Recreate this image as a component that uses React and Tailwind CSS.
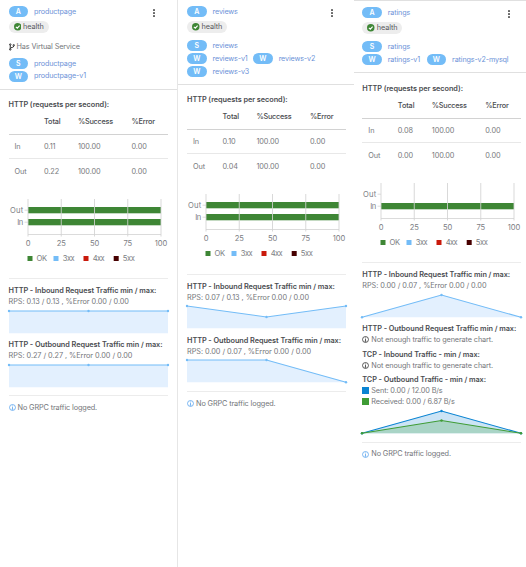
import React from 'react';

function Pill({ letter }) {
  return (
    <span className="flex h-[11px] w-[19.5px] shrink-0 items-center justify-center rounded-full bg-[#73bcf7] text-[7px] font-semibold text-white">
      {letter}
    </span>
  );
}

function Badge({ letter, name, className = '' }) {
  return (
    <div className={`flex h-[12.7px] items-center gap-[6px] ${className}`}>
      <Pill letter={letter} />
      <span className="text-[7.2px] tracking-[-0.13px] text-[#6c92d8]">{name}</span>
    </div>
  );
}

function Kebab() {
  return (
    <svg viewBox="0 0 4 10" className="mr-[14px] mt-[3px] h-[10px] w-[4px] fill-[#666]">
      <rect x="1" y="1" width="2" height="2" rx=".6" />
      <rect x="1" y="4" width="2" height="2" rx=".6" />
      <rect x="1" y="7" width="2" height="2" rx=".6" />
    </svg>
  );
}

function Health() {
  return (
    <div className="flex h-[11.5px] w-[40px] items-center gap-[2px] rounded-full bg-[#ededed] pl-[5px] text-[7.3px] tracking-[-0.1px] text-[#55575a]">
      <svg viewBox="0 0 16 16" className="h-[7.5px] w-[7.5px] shrink-0">
        <circle cx="8" cy="8" r="8" fill="#3e8635" />
        <path d="M4 8.3 7 11l5-5.5" fill="none" stroke="#fff" strokeWidth="2.4" />
      </svg>
      <span>health</span>
    </div>
  );
}

function BranchIcon() {
  return (
    <svg viewBox="0 0 12 16" className="h-[8px] w-[6px] shrink-0">
      <g fill="none" stroke="#333" strokeWidth="2">
        <circle cx="2.5" cy="3" r="1.4" />
        <circle cx="2.5" cy="13" r="1.4" />
        <circle cx="9.5" cy="4.5" r="1.4" />
        <path d="M2.5 4v8M9.5 6c0 4-6 2-7 5" />
      </g>
    </svg>
  );
}

function InfoIcon({ className }) {
  return (
    <svg viewBox="0 0 16 16" className={`h-[7px] w-[7px] shrink-0 ${className}`}>
      <circle cx="8" cy="8" r="6.8" fill="none" stroke="currentColor" strokeWidth="1.8" />
      <path d="M8 3.5v2M8 6.8V12M6.3 12h3.4" fill="none" stroke="currentColor" strokeWidth="1.8" />
    </svg>
  );
}

function RequestTable({ rows }) {
  return (
    <div className="text-[7.3px] tracking-[-0.1px] text-[#77797d]">
      <div className="grid h-[24.5px] grid-cols-[35.5px_34px_53.5px_1fr] items-center border-b border-[#d2d2d2] text-[#4a4c50]">
        <span />
        <span className="font-medium">Total</span>
        <span className="font-medium tracking-[-0.25px]">%Success</span>
        <span className="font-medium tracking-[-0.2px]">%Error</span>
      </div>
      {rows.map((row, i) => (
        <div
          key={row[0]}
          className={`grid h-[24.6px] grid-cols-[29.5px_34px_53.5px_1fr] items-center pl-[6px] ${i === 0 ? 'border-b border-[#e8e8e8]' : ''}`}
        >
          {row.map((cell, j) => (
            <span key={j}>{cell}</span>
          ))}
        </div>
      ))}
    </div>
  );
}

const TICKS = [0, 25, 50, 75, 100];
const LEGEND = [
  ['OK', '#3e8635', 18.5, 27.5, 10.5],
  ['3xx', '#73bcf7', 44.5, 53.7, 12],
  ['4xx', '#c9190b', 74.5, 83.7, 12],
  ['5xx', '#470000', 104.7, 113.8, 12],
];

function StatusChart({ out = true }) {
  return (
    <svg viewBox="0 0 159 80" className="mt-[1.1px] h-[80px] w-[159px] overflow-visible text-[7.6px]" fill="#7d8084">
      {out && <rect x="19" y="22" width="133" height="6.3" fill="#3e8635" />}
      <rect x="19" y="34" width="133" height="6.3" fill="#3e8635" />
      <path d="M15.5 25.2h3.5M15.5 37.2h3.5M19 49.5h133" stroke="#d2d2d2" strokeWidth=".8" />
      {TICKS.map((t) => (
        <g key={t}>
          <path d={`M${19 + t * 1.33} 14v37.5`} stroke="#d2d2d2" strokeOpacity=".85" />
          <text x={19 + t * 1.33} y="61" textAnchor="middle" letterSpacing="-.1">{t}</text>
        </g>
      ))}
      <text x="1" y="28" textLength="13.3">Out</text>
      <text x="8.3" y="40" textLength="6">In</text>
      {LEGEND.map(([label, color, x, tx, w]) => (
        <g key={label}>
          <rect x={x} y="71" width="5" height="5" fill={color} />
          <text x={tx} y="76.4" textLength={w}>{label}</text>
        </g>
      ))}
    </svg>
  );
}

function Spark({ series }) {
  return (
    <svg viewBox="0 0 159 24" className="h-[24px] w-[159px] overflow-visible">
      {series.map(({ y, color, fill }) => (
        <g key={color}>
          <path d={`M0 ${y[0]}L79.5 ${y[1]}L159 ${y[2]}V23.3H0Z`} fill={fill} />
          <path d={`M0 ${y[0]}L79.5 ${y[1]}L159 ${y[2]}`} fill="none" stroke={color} strokeWidth="1.1" />
          {y.map((v, i) => (
            <circle key={i} cx={i * 79.5} cy={v} r="1.2" fill={color} />
          ))}
        </g>
      ))}
    </svg>
  );
}

const blue = (y) => [{ y, color: '#73bcf7', fill: '#e3f0fe' }];

function Title({ children }) {
  return <div className="flex h-[11px] items-center text-[7.3px] font-semibold tracking-[-0.05px] text-[#4a4c50]">{children}</div>;
}

function Line({ children }) {
  return <div className="flex h-[11px] items-center gap-[2px] text-[7.3px] tracking-[-0.12px] text-[#74767a]">{children}</div>;
}

function NotEnough() {
  return (
    <Line>
      <InfoIcon className="text-[#333]" />
      <span>Not enough traffic to generate chart.</span>
    </Line>
  );
}

function Traffic({ direction, stats, y }) {
  return (
    <div className="flex h-[54.2px] flex-col">
      <Title>HTTP - {direction} Request Traffic min / max:</Title>
      <Line><span className="tracking-[-0.04px]">RPS: {stats} , %Error 0.00 / 0.00</span></Line>
      <div className="pt-[2.3px]"><Spark series={blue(y)} /></div>
    </div>
  );
}

function Grpc() {
  return (
    <div className="mt-[1.8px] border-t border-[#ececec] pt-[6px]">
      <Line>
        <InfoIcon className="text-[#5ba4ef]" />
        <span>No GRPC traffic logged.</span>
      </Line>
    </div>
  );
}

function Body({ rows, out, className, children }) {
  return (
    <div className={className}>
      <Title>HTTP (requests per second):</Title>
      <RequestTable rows={rows} />
      <StatusChart out={out} />
      <div className="mt-[13.5px] border-t border-[#ececec] pt-[6px]">{children}</div>
    </div>
  );
}

export default function App() {
  return (
    <div className="flex h-[567px] w-[526px] overflow-hidden whitespace-nowrap bg-white font-['Inter',sans-serif] text-[7.3px] leading-none">
      <section className="w-[177px]">
        <header className="h-[90px] border-b border-[#e0e0e0] pl-[8.5px] pt-[5px]">
          <div className="flex items-start justify-between">
            <Badge letter="A" name="productpage" />
            <div className="pr-[7px]"><Kebab /></div>
          </div>
          <div className="pt-[3px]"><Health /></div>
          <div className="mt-[8px] flex h-[12px] items-center gap-[2px] tracking-[-0.13px] text-[#74767a]">
            <BranchIcon />
            <span>Has Virtual Service</span>
          </div>
          <Badge letter="S" name="productpage" className="mt-[4.5px]" />
          <Badge letter="W" name="productpage-v1" />
        </header>
        <Body
          className="pl-[8.5px] pr-[9.5px] pt-[9px]"
          rows={[['In', '0.11', '100.00', '0.00'], ['Out', '0.22', '100.00', '0.00']]}
        >
          <Traffic direction="Inbound" stats="0.13 / 0.13" y={[1, 1, 1]} />
          <Traffic direction="Outbound" stats="0.27 / 0.27" y={[1, 1, 1]} />
          <Grpc />
        </Body>
      </section>

      <section className="w-[177px] border-l border-[#e6e6e6]">
        <header className="h-[85px] border-b border-[#e0e0e0] pl-[9px] pt-[5px]">
          <div className="flex items-start justify-between">
            <Badge letter="A" name="reviews" />
            <div className="pr-[6px]"><Kebab /></div>
          </div>
          <div className="pt-[3px]"><Health /></div>
          <Badge letter="S" name="reviews" className="mt-[7px]" />
          <div className="flex gap-[5.5px]">
            <Badge letter="W" name="reviews-v1" />
            <Badge letter="W" name="reviews-v2" />
          </div>
          <Badge letter="W" name="reviews-v3" />
        </header>
        <Body
          className="pl-[9px] pr-[8px] pt-[9.4px]"
          rows={[['In', '0.10', '100.00', '0.00'], ['Out', '0.04', '100.00', '0.00']]}
        >
          <Traffic direction="Inbound" stats="0.07 / 0.13" y={[1, 12, 1]} />
          <Traffic direction="Outbound" stats="0.00 / 0.07" y={[1, 1, 23.3]} />
          <Grpc />
        </Body>
      </section>

      <section className="w-[172px]">
        <header className="h-[73px] border-b border-t border-[#e0e0e0] pl-[8.3px] pt-[5px]">
          <div className="flex items-start justify-between">
            <Badge letter="A" name="ratings" />
            <div className="pr-[1px]"><Kebab /></div>
          </div>
          <div className="pt-[3px]"><Health /></div>
          <Badge letter="S" name="ratings" className="mt-[7px]" />
          <div className="flex gap-[6.5px]">
            <Badge letter="W" name="ratings-v1" />
            <Badge letter="W" name="ratings-v2-mysql" />
          </div>
        </header>
        <Body
          out={false}
          className="pl-[8.3px] pr-[4.7px] pt-[10px]"
          rows={[['In', '0.08', '100.00', '0.00'], ['Out', '0.00', '100.00', '0.00']]}
        >
          <Traffic direction="Inbound" stats="0.00 / 0.07" y={[23.3, 1, 23.3]} />
          <Title>HTTP - Outbound Request Traffic min / max:</Title>
          <NotEnough />
          <div className="h-[3.4px]" />
          <Title>TCP - Inbound Traffic - min / max:</Title>
          <NotEnough />
          <div className="h-[3.4px]" />
          <Title>TCP - Outbound Traffic - min / max:</Title>
          <Line>
            <i className="h-[7px] w-[7px] bg-[#0b84d2]" />
            <span>Sent: 0.00 / 12.00 B/s</span>
          </Line>
          <Line>
            <i className="h-[7px] w-[7px] bg-[#3f9c35]" />
            <span>Received: 0.00 / 6.87 B/s</span>
          </Line>
          <div className="h-[32.5px] pt-[2.5px]">
            <Spark
              series={[
                { y: [23.3, 1, 23.3], color: '#0b84d2', fill: '#cce4f5' },
                { y: [23.3, 10.5, 23.3], color: '#3f9c35', fill: '#a9d4c6' },
              ]}
            />
          </div>
          <Grpc />
        </Body>
      </section>
    </div>
  );
}
